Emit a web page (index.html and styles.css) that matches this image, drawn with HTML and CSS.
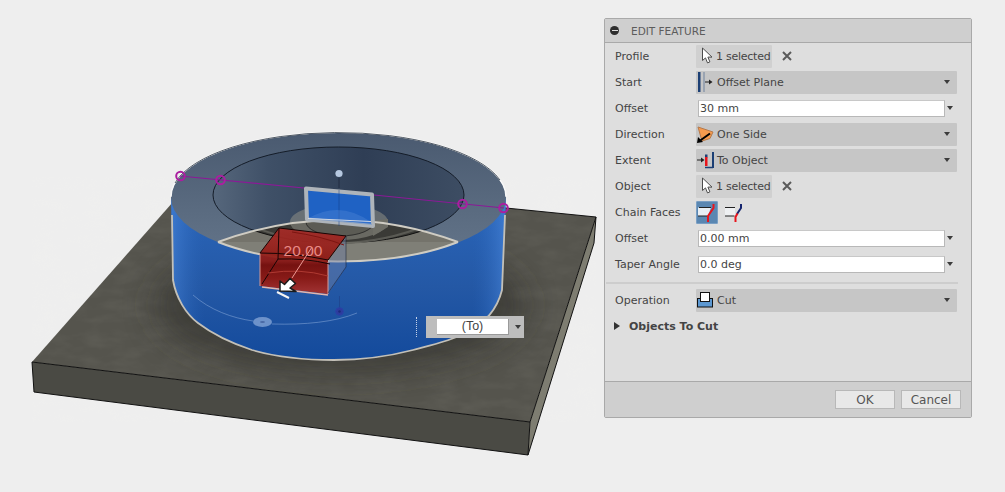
FILE: index.html
```html
<!DOCTYPE html>
<html lang="en">
<head>
<meta charset="utf-8">
<title>Edit Feature</title>
<link rel="stylesheet" href="styles.css">
</head>
<body>
<svg width="0" height="0" class="defs">
  <defs>
    <symbol id="cursor" viewBox="0 0 14 18">
      <path d="M1.500 1v12.500l3-2.600 2 5 2.400-1-2-4.800h4.100z" fill="#fff" stroke="#4c4c4c" stroke-width="1"/>
    </symbol>
    <symbol id="caret" viewBox="0 0 6 4">
      <path d="M0 0h6L3 4z" fill="#3c3c3c"/>
    </symbol>
    <symbol id="close" viewBox="0 0 10 10">
      <path d="M1 1l8 8M9 1l-8 8" stroke="#5a5a5a" stroke-width="2" fill="none"/>
    </symbol>
  </defs>
</svg>
<main class="page">
  <div class="stage">
    <svg class="scene" width="604" height="492" viewBox="0 0 604 492">
      <defs>
        <linearGradient id="wall" x1="0" y1="0" x2="0" y2="1">
          <stop offset="0" stop-color="#2a66bb"/>
          <stop offset="0.55" stop-color="#2458a5"/>
          <stop offset="1" stop-color="#134a9c"/>
        </linearGradient>
        <linearGradient id="wallSide" x1="0" y1="0" x2="1" y2="0">
          <stop offset="0" stop-color="#4c8ae0" stop-opacity=".55"/>
          <stop offset="0.1" stop-color="#2a66bb" stop-opacity="0"/>
          <stop offset="0.9" stop-color="#2a66bb" stop-opacity="0"/>
          <stop offset="1" stop-color="#4c8ae0" stop-opacity=".6"/>
        </linearGradient>
        <linearGradient id="ring" x1="0" y1="0" x2="0" y2="1">
          <stop offset="0" stop-color="#4a5a70"/>
          <stop offset="0.6" stop-color="#5a6b80"/>
          <stop offset="1" stop-color="#64758a"/>
        </linearGradient>
        <linearGradient id="hole" x1="0" y1="0" x2="1" y2="0">
          <stop offset="0" stop-color="#56677c"/>
          <stop offset="0.22" stop-color="#3f5067"/>
          <stop offset="0.6" stop-color="#2f3e55"/>
          <stop offset="1" stop-color="#3d4d63"/>
        </linearGradient>
        <linearGradient id="redBox" x1="0" y1="0" x2="0" y2="1">
          <stop offset="0" stop-color="#a52c28"/>
          <stop offset="0.5" stop-color="#8e1a14"/>
          <stop offset="0.56" stop-color="#7a0e08"/>
          <stop offset="0.76" stop-color="#8d1710"/>
          <stop offset="1" stop-color="#a8322e"/>
        </linearGradient>
        <filter id="soft" x="-30%" y="-30%" width="160%" height="160%">
          <feGaussianBlur stdDeviation="16"/>
        </filter>
        <filter id="grain" x="0" y="0" width="100%" height="100%">
          <feTurbulence type="fractalNoise" baseFrequency="0.035 0.09" numOctaves="3" seed="4"/>
          <feColorMatrix values="0 0 0 0 1  0 0 0 0 1  0 0 0 0 .9  .55 0 0 0 -.2"/>
        </filter>
        <clipPath id="plateClip"><polygon points="32,362 530,422 596,217 195,177"/></clipPath>
        <clipPath id="lensClip"><path d="M218 242Q338 198 458 242A167.500 64.500 0 0 1 218 242Z"/></clipPath>
      </defs>

      <polygon points="32,362 530,422 596,217 195,177" fill="#55544d"/>
      <polygon points="32,362 530,422 596,217 195,177" filter="url(#grain)" opacity=".16"/>
      <g clip-path="url(#plateClip)">
        <ellipse cx="340" cy="305" rx="185" ry="68" fill="#2e2d29" opacity=".6" filter="url(#soft)"/>
      </g>
      <polygon points="32,362 530,422 528,455 34,392" fill="#4a4a44"/>
      <polygon points="530,422 596,217 594,243 528,455" fill="#7e7d71"/>
      <path d="M32 362L530 422L596 217M530 422L528 455L34 392L32 362M596 217L594 243L528 455" fill="none" stroke="#111" stroke-width="1"/>
      <path d="M195 177L596 217" stroke="#111" stroke-width="1"/>

      <path d="M171 198L173 280C176 298 186 314 198 323C215 336 234 344 252 350C280 358 308 360 334 360C362 360 390 356 413 350C432 345 450 341 466 333C484 324 497 310 502 290L506 198Z" fill="url(#wall)"/>
      <path d="M171 198L173 280C176 298 186 314 198 323C215 336 234 344 252 350C280 358 308 360 334 360C362 360 390 356 413 350C432 345 450 341 466 333C484 324 497 310 502 290L506 198Z" fill="url(#wallSide)"/>
      <path d="M172 215L173 280C176 298 186 314 198 323C215 336 234 344 252 350C280 358 308 360 334 360C362 360 390 356 413 350C432 345 450 341 466 333C484 324 497 310 502 290L505 215" fill="none" stroke="#c3c0b8" stroke-width="1.800"/>

      <ellipse cx="338.500" cy="197.500" rx="167.500" ry="64.500" fill="url(#ring)"/>
      <path d="M171 197.500A167.500 64.500 0 0 1 506 197.500" fill="none" stroke="#f8f8f8" stroke-width="1.500" transform="translate(0 -.8)"/>
      <path d="M175 183A167.500 64.500 0 0 1 500 180" fill="none" stroke="#26313f" stroke-width=".8"/>

      <ellipse cx="338.500" cy="195" rx="125.500" ry="48" fill="url(#hole)" stroke="#141c28" stroke-width="1"/>

      <g clip-path="url(#lensClip)">
        <rect x="200" y="190" width="280" height="90" fill="#74736b"/>
        <ellipse cx="338.500" cy="195" rx="125.500" ry="48" fill="#3a3a36" stroke="#111" stroke-width="1"/>
        <path d="M245 224Q338 262 430 224" fill="none" stroke="#5a5a54" stroke-width="2"/>
      </g>

      <ellipse cx="339" cy="222" rx="49" ry="18" fill="#8f8f87" fill-opacity=".55"/>
      <path d="M373 221V236L388 227V219Z" fill="#6e6e66"/>
      <ellipse cx="340" cy="222" rx="34" ry="14" fill="#55554f" fill-opacity=".7" stroke="#222" stroke-width=".8"/>

      <path d="M218 242Q338 198 458 242" fill="none" stroke="#cfccc3" stroke-width="2"/>
      <path d="M218 242A167.500 64.500 0 0 0 458 242" fill="#d8d6cf" fill-opacity=".12" stroke="#cfccc3" stroke-width="2"/>

      <line x1="339" y1="178" x2="339" y2="188" stroke="#141d30" stroke-width=".8" opacity=".7"/>

      <polyline points="180,176 304,188" fill="none" stroke="#8b1a97" stroke-width="1.200"/>
      <polyline points="374,195 504,208" fill="none" stroke="#8b1a97" stroke-width="1.200"/>
      <g fill="none" stroke="#ab1ea0" stroke-width="2">
        <circle cx="180.500" cy="176" r="4.300"/>
        <circle cx="220.500" cy="180" r="4.300"/>
        <circle cx="462.500" cy="204" r="4.300"/>
        <circle cx="503.500" cy="208" r="4.300"/>
      </g>
      <circle cx="339" cy="173.500" r="3.600" fill="#b6c8e0"/>

      <path d="M306 188.500L372 194.500L373 226L307 219.500Z" fill="#1f62c4" stroke="#aeb4ba" stroke-width="4" stroke-linejoin="round"/>
      <path d="M339 190V226" stroke="#123a80" stroke-width=".8" opacity=".6"/>
      <path d="M309 218Q340 200 371 222L372 225L308 219Z" fill="#4f88d6" fill-opacity=".4"/>
      <path d="M308 218.500L371 221.500" stroke="#cfd7e4" stroke-width="1.100" fill="none"/>

      <path d="M346 236L346 267L328 294L328 262Z" fill="#6f7fa3" fill-opacity=".45"/>
      <path d="M279 228L346 236L328 260L328 294L260 286L260 253Z" fill="url(#redBox)" fill-opacity=".95"/>
      <path d="M262 287L328 295" stroke="#e2b6ae" stroke-width="1.600"/>
      <path d="M260 253V286M328 262V294" stroke="#d99a94" stroke-width="1"/>
      <path d="M279 228L260 253M260 253Q295 253 328 260M346 236L328 260M279 228L346 236" fill="none" stroke="#180404" stroke-width="1"/>
      <path d="M279 228L278 259M278 259L262 284M278 259Q305 258 330 264" fill="none" stroke="#180404" stroke-width="1"/>
      <path d="M346 236V267L328 293" fill="none" stroke="#1b2034" stroke-width=".8" opacity=".7"/>
      <path d="M292 232Q320 236 344 245" fill="none" stroke="#7c1511" stroke-width="1"/>
      <path d="M268 273Q300 268 328 276" fill="none" stroke="#b03a32" stroke-width="1"/>

      <line x1="312" y1="247" x2="292" y2="278" stroke="#ec9b96" stroke-width="1"/>
      <text x="303" y="256" class="dim">20.00</text>
      <path d="M280 291L280 281L284.500 284.500L290 278.500L295.500 283.500L290 288L296 291.500Z" fill="#fff" stroke="#1b1b1b" stroke-width="1.500" stroke-linejoin="round"/>
      <line x1="277" y1="292" x2="289" y2="298" stroke="#f4f4f4" stroke-width="2"/>

      <path d="M193 295C210 310 232 318 253 321M272 324C305 325 335 322 357 313" fill="none" stroke="#7da0d4" stroke-width="1" opacity=".6"/>
      <ellipse cx="262.500" cy="322" rx="9.500" ry="5" fill="#6d92ca"/>
      <ellipse cx="262.500" cy="322" rx="2.500" ry="1" fill="#4a6aa5"/>
      <path d="M339.500 296V308" stroke="#1d3a80" stroke-width=".8" opacity=".6"/>
      <circle cx="339.500" cy="311.500" r="3.800" fill="#2d3c9e" stroke="#2b40a8" stroke-width="1"/>
      <circle cx="339.500" cy="311.500" r="1.200" fill="#1d2a7a"/>
    </svg>

    <div class="grip"></div>
    <div class="dim-input">
      <div class="dim-field">(To)</div>
      <svg class="caret" width="6" height="4"><use href="#caret"/></svg>
    </div>
  </div>

  <section class="panel">
    <header class="panel-head">
      <span class="collapse"></span>
      <span class="panel-title">EDIT FEATURE</span>
    </header>
    <div class="panel-body">
      <div class="row">
        <span class="label">Profile</span>
        <div class="pick"><svg class="pick-icon" width="14" height="18"><use href="#cursor"/></svg><span>1 selected</span></div>
        <svg class="close" width="10" height="10"><use href="#close"/></svg>
      </div>
      <div class="row">
        <span class="label">Start</span>
        <div class="select">
          <svg class="opt-icon" width="20" height="20" viewBox="0 0 20 20">
            <rect x="2" y="0" width="2.500" height="20" fill="#1c3f74"/>
            <rect x="7" y="0" width="2" height="20" fill="#9aa4b2"/>
            <path d="M9 10H14" stroke="#222" stroke-width="1"/>
            <path d="M13 7.500L16.500 10L13 12.500Z" fill="#222"/>
          </svg>
          <span>Offset Plane</span>
          <svg class="caret" width="6" height="4"><use href="#caret"/></svg>
        </div>
      </div>
      <div class="row">
        <span class="label">Offset</span>
        <div class="field"><span>30 mm</span></div>
        <svg class="caret field-caret" width="6" height="4"><use href="#caret"/></svg>
      </div>
      <div class="row">
        <span class="label">Direction</span>
        <div class="select">
          <svg class="opt-icon" width="20" height="20" viewBox="0 0 20 20">
            <path d="M2 3L17 8L14 14.500L6 17Z" fill="#f59a4e" stroke="#b57a4c" stroke-width="1"/>
            <path d="M14 9.500L3.500 17" stroke="#000" stroke-width="2"/>
            <path d="M1 19L2 13L7 18Z" fill="#000"/>
          </svg>
          <span>One Side</span>
          <svg class="caret" width="6" height="4"><use href="#caret"/></svg>
        </div>
      </div>
      <div class="row">
        <span class="label">Extent</span>
        <div class="select">
          <svg class="opt-icon" width="20" height="20" viewBox="0 0 20 20">
            <path d="M1 10H7" stroke="#222" stroke-width="1"/>
            <path d="M5 7.500L8.500 10L5 12.500Z" fill="#222"/>
            <rect x="9" y="4.500" width="2.500" height="3" fill="#1c3f74"/>
            <rect x="9" y="7" width="2.500" height="9" fill="#e8141c"/>
            <path d="M17 2V18" stroke="#1c3f74" stroke-width="2"/>
            <path d="M9 17.500H17" stroke="#1c3f74" stroke-width="1.500"/>
          </svg>
          <span>To Object</span>
          <svg class="caret" width="6" height="4"><use href="#caret"/></svg>
        </div>
      </div>
      <div class="row">
        <span class="label">Object</span>
        <div class="pick"><svg class="pick-icon" width="14" height="18"><use href="#cursor"/></svg><span>1 selected</span></div>
        <svg class="close" width="10" height="10"><use href="#close"/></svg>
      </div>
      <div class="row">
        <span class="label">Chain Faces</span>
        <div class="chain">
          <div class="chain-btn">
            <svg width="20" height="20" viewBox="0 0 20 20">
              <path d="M1 5.500H14L11 14H1Z" fill="#e8eef4"/>
              <path d="M1 14H10.500M2 5.500H14" stroke="#222" stroke-width="1.200" fill="none"/>
              <path d="M16.500 2V6L11 14V20" stroke="#e8141c" stroke-width="2" fill="none"/>
            </svg>
          </div>
          <svg class="chain-off" width="20" height="20" viewBox="0 0 20 20">
            <path d="M0 5.500H10V14H0Z" fill="#eef0f2"/>
            <path d="M0 14H9.500M0 5.500H10" stroke="#222" stroke-width="1.200" fill="none"/>
            <path d="M16 2V6L12 12" stroke="#14246e" stroke-width="2" fill="none"/>
            <path d="M12.500 11.500L10.500 15V20" stroke="#e8141c" stroke-width="2" fill="none"/>
          </svg>
        </div>
      </div>
      <div class="row">
        <span class="label">Offset</span>
        <div class="field"><span>0.00 mm</span></div>
        <svg class="caret field-caret" width="6" height="4"><use href="#caret"/></svg>
      </div>
      <div class="row">
        <span class="label">Taper Angle</span>
        <div class="field"><span>0.0 deg</span></div>
        <svg class="caret field-caret" width="6" height="4"><use href="#caret"/></svg>
      </div>
      <div class="rule"></div>
      <div class="row">
        <span class="label">Operation</span>
        <div class="select">
          <svg class="opt-icon" width="20" height="20" viewBox="0 0 20 20">
            <rect x="1.500" y="8.500" width="15" height="8.500" fill="#5c98d2" stroke="#111" stroke-width="1"/>
            <rect x="4.500" y="2.500" width="9" height="9" fill="#fff" stroke="#111" stroke-width="1"/>
          </svg>
          <span>Cut</span>
          <svg class="caret" width="6" height="4"><use href="#caret"/></svg>
        </div>
      </div>
      <div class="row group">
        <span class="triangle"></span>
        <span class="group-title">Objects To Cut</span>
      </div>
    </div>
    <footer class="panel-foot">
      <button class="btn">OK</button>
      <button class="btn">Cancel</button>
    </footer>
  </section>
</main>
</body>
</html>
```
FILE: styles.css
```css
* { box-sizing: border-box; }
html, body { margin: 0; padding: 0; }
body {
  width: 1005px;
  height: 492px;
  overflow: hidden;
  background: #eeeeee;
  font-family: "DejaVu Sans", sans-serif;
  font-size: 11px;
  color: #444;
}
.defs { position: absolute; }
.page { display: flex; align-items: flex-start; }
.stage { position: relative; width: 604px; height: 492px; flex: none; }
.scene { display: block; }
.dim {
  font-family: "Liberation Sans", sans-serif;
  font-size: 15.500px;
  fill: #e88a86;
  text-anchor: middle;
}
.grip {
  position: absolute;
  left: 416px;
  top: 317px;
  width: 2px;
  height: 20px;
  border-left: 1.500px dotted #c5d2e8;
}
.dim-input {
  position: absolute;
  left: 426px;
  top: 316px;
  width: 98px;
  height: 22px;
  background: #bdbdbd;
  display: flex;
  align-items: center;
  padding-left: 11px;
}
.dim-field {
  width: 72px;
  height: 16px;
  background: #fff;
  border-bottom: 1px solid #9a9a9a;
  border-right: 1px solid #9a9a9a;
  text-align: center;
  font-family: "Liberation Sans", sans-serif;
  font-size: 12.500px;
  line-height: 15px;
  color: #444;
}
.dim-input .caret { margin-left: 6px; }

.panel {
  width: 368px;
  height: 400px;
  margin-top: 18px;
  flex: none;
  background: #dedede;
  border: 1px solid #a9a9a9;
  border-radius: 2px;
  display: flex;
  flex-direction: column;
}
.panel-head {
  height: 24px;
  flex: none;
  background: #cfcfcf;
  border-bottom: 1px solid #a9a9a9;
  display: flex;
  align-items: center;
  padding-left: 5px;
  gap: 12px;
}
.collapse {
  width: 9px;
  height: 9px;
  border-radius: 50%;
  background: #2e2e2e;
  display: flex;
  align-items: center;
  justify-content: center;
}
.collapse::after {
  content: "";
  width: 6px;
  height: 1.500px;
  background: #ddd;
}
.panel-title { color: #5c5c5c; font-size: 10.500px; }
.panel-body { flex: 1; display: flex; flex-direction: column; }
.row {
  height: 26px;
  flex: none;
  display: flex;
  align-items: center;
  padding-left: 10px;
}
.label { width: 81px; flex: none; }
.pick {
  width: 76px;
  height: 23px;
  background: #d0d0d0;
  border-radius: 1px;
  display: flex;
  align-items: center;
  padding-left: 5px;
  gap: 1px;
}
.pick-icon { flex: none; }
.pick span { letter-spacing: -.25px; }
.close { margin-left: 10px; }
.select {
  width: 261px;
  height: 23px;
  background: #c6c6c6;
  border-radius: 1px;
  display: flex;
  align-items: center;
  padding-right: 7px;
}
.opt-icon { flex: none; margin-right: 1px; }
.select .caret { margin-left: auto; }
.field {
  width: 247px;
  height: 17px;
  margin-left: 2px;
  background: #fff;
  border: 1px solid #b8b8b8;
  border-top-color: #c8c8c8;
  display: flex;
  align-items: center;
  padding-left: 1px;
}
.field-caret { margin-left: 2px; }
.chain { display: flex; align-items: center; gap: 7px; }
.chain-btn {
  width: 22px;
  height: 23px;
  background: #5a87b2;
  border: 1px solid #7a9fc4;
  border-radius: 1px;
  display: flex;
  align-items: center;
  justify-content: center;
}
.rule {
  height: 2px;
  margin: 5px 13px 3px 1px;
  background: #cdcdcd;
  flex: none;
}
.group { padding-left: 9px; }
.triangle {
  width: 0;
  height: 0;
  border-left: 6px solid #333;
  border-top: 4.500px solid transparent;
  border-bottom: 4.500px solid transparent;
  margin-right: 9px;
}
.group-title { font-weight: bold; color: #444; }
.panel-foot {
  height: 36px;
  flex: none;
  background: #cfcfcf;
  border-top: 1px solid #a9a9a9;
  display: flex;
  justify-content: flex-end;
  align-items: center;
  gap: 6px;
  padding-right: 10px;
}
.btn {
  width: 60px;
  height: 19px;
  padding: 0;
  background: #e8e8e8;
  border: 1px solid #b8b8b8;
  border-radius: 0;
  font-family: "DejaVu Sans", sans-serif;
  font-size: 12px;
  line-height: 16px;
  color: #555;
}
```
